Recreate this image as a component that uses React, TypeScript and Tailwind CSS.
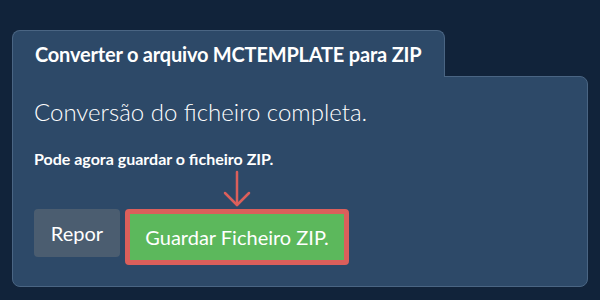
export default function App() {
  return (
    <div
      className="w-[600px] h-[300px] bg-[#11233a] pt-[30px] pl-[12px] overflow-hidden"
      style={{ fontFamily: "Lato, 'Liberation Sans', sans-serif" }}
    >
      {/* Tab */}
      <div className="relative z-10 -mb-px w-[433px] h-[47px] bg-[#2d4968] border border-b-0 border-[#4a6583] rounded-t-[8px] flex items-center pl-[22px]">
        <h1 className="text-[20px] font-bold text-white tracking-[-0.2px]">
          Converter o arquivo MCTEMPLATE para ZIP
        </h1>
      </div>

      {/* Body */}
      <div className="w-[576px] h-[211px] bg-[#2d4968] border border-[#4a6583] rounded-tr-[8px] rounded-b-[8px] pl-[21px] pt-[20px]">
        <p className="text-[24px] font-light text-white leading-[30px]">
          Conversão do ficheiro completa.
        </p>
        <p className="mt-[22px] text-[16px] font-bold text-white leading-[20px]">
          Pode agora guardar o ficheiro ZIP.
        </p>

        <div className="flex items-start gap-[5px] mt-[40px] relative">
          <button className="w-[86px] h-[48px] bg-[#4b5d70] text-white text-[20px] rounded-[4px]">
            Repor
          </button>
          <div className="relative border-[5px] border-[#db5f5b] rounded-[4px]">
            <svg
              className="absolute left-[93px] -top-[44px]"
              width="28"
              height="38"
              viewBox="0 0 28 38"
              fill="none"
              stroke="#db5f5b"
              strokeWidth="2.5"
              strokeLinecap="round"
            >
              <line x1="14" y1="2" x2="14" y2="35" />
              <polyline points="2,23 14,35 26,23" strokeLinejoin="round" />
            </svg>
            <button className="w-[214px] h-[46px] bg-[#5cb85c] text-white text-[20px]">
              Guardar Ficheiro ZIP.
            </button>
          </div>
        </div>
      </div>
    </div>
  );
}
